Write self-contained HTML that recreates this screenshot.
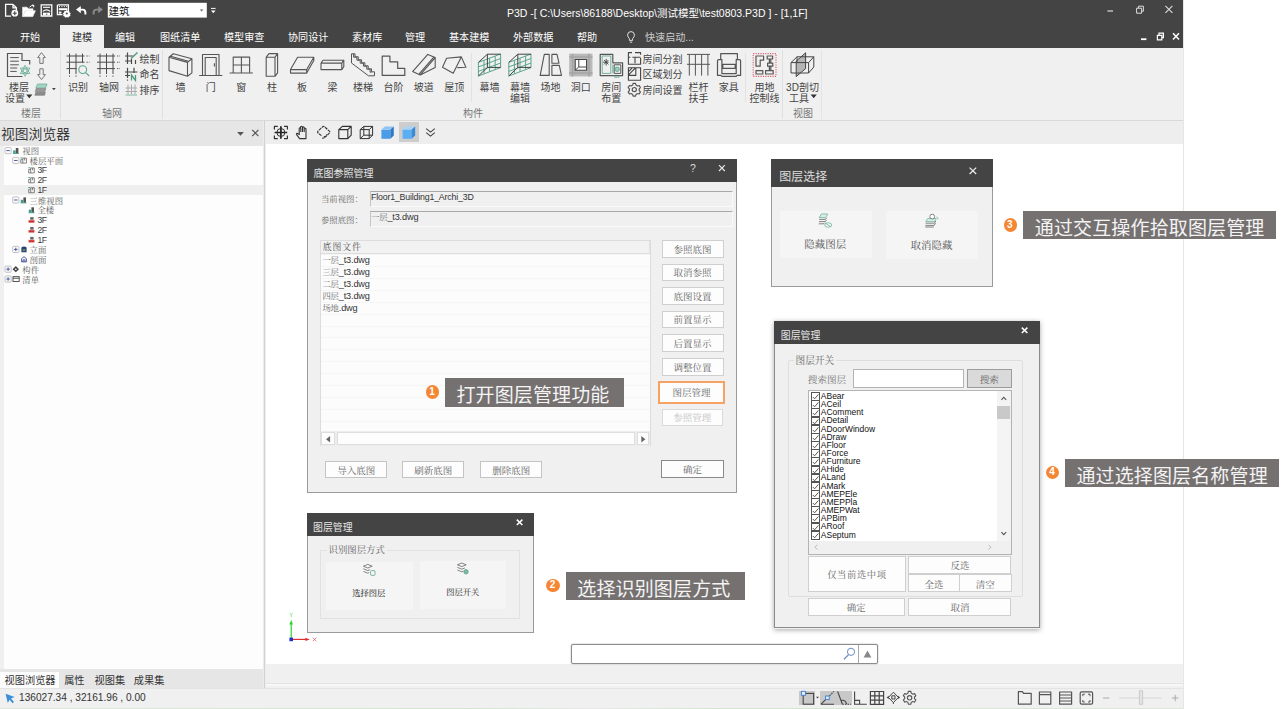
<!DOCTYPE html>
<html lang="zh-CN">
<head>
<meta charset="utf-8">
<title>P3D</title>
<style>
*{box-sizing:border-box;margin:0;padding:0}
html,body{width:1285px;height:709px;overflow:hidden;background:#fff}
body{font-family:"Liberation Sans","Noto Sans CJK SC",sans-serif;font-size:12px;color:#333;position:relative}
.abs,.abs *{position:absolute}
.abs{position:absolute}
.t{position:absolute;white-space:nowrap;line-height:1}
.serif{font-family:"Liberation Serif","Noto Serif CJK SC",serif}
svg{position:absolute;overflow:visible}
#app{position:absolute;left:0;top:0;width:1184px;height:709px;background:#fff;border-right:1px solid #e6e6e6;overflow:hidden}
#titlebar{position:absolute;left:0;top:0;width:1183px;height:48px;background:#444}
#ribbon{position:absolute;left:0;top:48px;width:1183px;height:72px;background:#f0f0f0}
#ribline{position:absolute;left:0;top:120px;width:1183px;height:1px;background:#d9d9d9}
.tab{position:absolute;top:31px;color:#fff;font-size:10.1px;white-space:nowrap;line-height:14px}
.rl{position:absolute;font-size:10px;line-height:11.2px;color:#444;white-space:nowrap;text-align:center}
.gl{position:absolute;top:108px;font-size:10px;line-height:11px;color:#777;white-space:nowrap}
.vsep{position:absolute;width:1px;background:#e0e0e0}

.dlg{position:absolute;background:#f0f0f0;border:1px solid #9a9a9a;border-top:none}
.dtt{position:absolute;background:#444}
.dttx{margin-top:1.1px;position:absolute;white-space:nowrap;color:#e6e6e6;font-size:10px;line-height:12px}
.btn{padding-top:.8px;position:absolute;background:#fdfdfd;border:1px solid #cfcfcf;color:#666;font-family:"Liberation Serif","Noto Serif CJK SC",serif;font-size:9.5px;text-align:center;white-space:nowrap}
.fld{position:absolute;border-top:1px solid #a8a8a8;border-left:1px solid #c4c4c4;border-bottom:1px solid #fafafa;border-right:1px solid #fafafa;background:#f0f0f0}
.sl{margin-top:1.3px;position:absolute;white-space:nowrap;font-family:"Liberation Serif","Noto Serif CJK SC",serif;color:#666}
.nl{position:absolute;white-space:nowrap;color:#333}
</style>
</head>
<body>
<div id="app">
<!-- TITLEBAR -->
<div id="titlebar">
  <svg style="left:0;top:0" width="230" height="24" viewBox="0 0 230 24" fill="none" stroke="#fff" stroke-width="1.3">
    <path d="M13 4.4H5.6V16.2H11 M13 4.4L16.4 7.8V10.5 M13 4.4V7.8H16.4"/>
    <circle cx="14.8" cy="13.2" r="3.4" fill="#fff" stroke="none"/><path d="M14.8 11.2v4M12.8 13.2h4" stroke="#444" stroke-width="1.1"/>
    <path d="M22.6 16.6V7.2H27L28.4 8.8H33V10.4H25.2L22.6 16.6Z M25.6 10.8H35.4L32.8 16.6H22.8Z" fill="#fff" stroke-width=".6"/>
    <path d="M29.5 7.2Q31.5 4.8 34 5.6M34 5.6l-1.6-.9M34 5.6l-.6 1.7" stroke-width="1"/>
    <path d="M41.2 4.9H51.8V16H41.2Z" stroke-width="1.3"/><path d="M43 7.3H50" stroke-width="1.1"/><path d="M42.8 11.4Q46.5 8.2 50.2 11.400000" stroke-width="1.2"/><rect x="43" y="12.7" width="7" height="2.6" fill="#fff" stroke="none"/><path d="M45.8 14.2h1.6" stroke="#444" stroke-width=".9"/>
    <path d="M57.4 4.9H68.4V11 M57.4 4.9V14.6H62.4" stroke-width="1.3"/><path d="M59 6.600000h1M61.4 6.600000h1M63.800000 6.600000h1M66.2 6.600000h1" stroke-width="1"/><rect x="58.8" y="8.2" width="8.6" height="2" fill="#fff" stroke="none"/><rect x="58.8" y="11.6" width="2.6" height="2" fill="#fff" stroke="none"/>
    <path d="M66.8 9.8l.9 1.300000 1.500000-.2.3 1.500000 1.400000.8-.9 1.300000.5 1.500000-1.500000.4-.8 1.400000-1.400000-.7-1.400000.7-.8-1.400000-1.500000-.4.5-1.500000-.9-1.300000 1.400000-.8.3-1.500000 1.500000.2z" fill="#fff" stroke="none"/><circle cx="66.8" cy="13.4" r="1" fill="#444" stroke="none"/>
    <path d="M76 9.6l4.800000-3.600000v7.200000z" fill="#fff" stroke="none"/><path d="M80 9.600000H82.600000Q85.400000 9.600000 85.400000 12.800000V14.600000" stroke-width="1.900000"/>
    <path d="M103 9.6l-4.800000-3.600000v7.200000z" fill="#8a8a8a" stroke="none"/><path d="M99 9.600000H96.400000Q93.600000 9.600000 93.600000 12.800000V14.600000" stroke="#8a8a8a" stroke-width="1.900000"/>
    <rect x="107.8" y="2.8" width="99" height="14.8" fill="#fff" stroke="none"/>
    <path d="M199.8 9.4h3.6l-1.8 2.2z" fill="#666" stroke="none"/>
    <path d="M211 8.4h4.6" stroke-width="1"/><path d="M211 10.6h4.6l-2.3 2.6z" fill="#fff" stroke="none"/>
  </svg>
  <div class="t" style="left:108.5px;top:4.5px;font-size:10.5px;color:#111;line-height:12px">建筑</div>
  <div class="t" style="left:507px;top:6px;font-size:10.5px;color:#fff;line-height:14px" id="ttl">P3D -[ C:\Users\86188\Desktop\测试模型\test0803.P3D ] - [1,1F]</div>
  <svg style="left:1100px;top:0" width="84" height="48" viewBox="1100 0 84 48" fill="none" stroke="#ddd" stroke-width="1">
    <path d="M1107.4 11h5.6" stroke-width="1.2"/>
    <path d="M1136.6 8.2h5v5h-5z M1138.4 8.2V6.2h5v5h-1.8"/>
    <path d="M1165.4 5.8l7 7M1172.4 5.8l-7 7" stroke-width="1.1"/>
    <g stroke="#fff" stroke-width="1.5">
    <path d="M1141 39.2h5.4" stroke-width="1.8"/>
    <path d="M1157.4 35.4h4.4v4.4h-4.4z M1159 35.4V33.2h4.4v4.4h-1.6" stroke-width="1.2"/>
    <path d="M1173 33.2l6 6.2M1179 33.2l-6 6.2"/>
    </g>
  </svg>
  <svg style="left:626px;top:30px" width="12" height="14" viewBox="0 0 12 14" fill="none" stroke="#ddd" stroke-width="1"><path d="M3.4 8.6Q1.6 7 1.6 5A3.4 3.4 0 0 1 8.400000000000001 5Q8.4 7 6.6 8.6V10.4H3.4Z M3.8 12.2H6.2"/></svg>
  <div class="abs" style="left:60px;top:25px;width:44px;height:23px;background:#f0f0f0"></div>
  <div class="tab" style="left:20px">开始</div>
  <div class="tab" style="left:72px;color:#333">建模</div>
  <div class="tab" style="left:115px">编辑</div>
  <div class="tab" style="left:160px">图纸清单</div>
  <div class="tab" style="left:224px">模型审查</div>
  <div class="tab" style="left:288px">协同设计</div>
  <div class="tab" style="left:352px">素材库</div>
  <div class="tab" style="left:405px">管理</div>
  <div class="tab" style="left:449px">基本建模</div>
  <div class="tab" style="left:513px">外部数据</div>
  <div class="tab" style="left:577px">帮助</div>
  <div class="tab" style="left:645px;color:#ccc">快速启动...</div>
</div>
<!-- RIBBON -->
<div id="ribbon"></div>
<div id="ribline"></div>
<!-- group separators -->
<div class="vsep" style="left:60px;top:50px;height:69px"></div>
<div class="vsep" style="left:162px;top:50px;height:69px"></div>
<div class="vsep" style="left:471px;top:53px;height:49px;background:#e2e2e2"></div>
<div class="vsep" style="left:745px;top:53px;height:49px;background:#e2e2e2"></div>
<div class="vsep" style="left:782px;top:50px;height:69px"></div>
<div class="vsep" style="left:821px;top:50px;height:69px;background:#e4e4e4"></div>
<div class="gl" style="left:21px">楼层</div>
<div class="gl" style="left:102px">轴网</div>
<div class="gl" style="left:463px">构件</div>
<div class="gl" style="left:793px">视图</div>
<!-- G1 楼层 -->
<svg style="left:0;top:48px" width="62" height="60" viewBox="0 48 62 60" fill="none" stroke="#555" stroke-width="1.2">
  <path d="M22.5 76.5H7.5V53.5H22V60.5H29.7V64.5"/>
  <path d="M10.2 57.6h8.6M10.2 61.2h8.6M10.2 64.8h8.6M10.2 68h7M10.2 71.4h6.5" stroke-width="1"/>
  <g stroke="#5aa58a" stroke-width="1.1">
    <circle cx="25.1" cy="70.8" r="1.9" stroke-width=".8" fill="#f0f0f0"/>
    <path d="M25.10 65.30L29.86 73.55L20.34 73.55Z M25.10 76.30L20.34 68.05L29.86 68.05Z" stroke-linejoin="round" stroke-width=".75"/>
  </g>
  <path d="M41.5 52.6l3.9 5h-2.2v5.8h-3.4v-5.8h-2.2z" stroke="#777" stroke-width="1"/>
  <path d="M41.5 79.6l3.9-5h-2.2v-5.8h-3.4v5.8h-2.2z" stroke="#777" stroke-width="1"/>
  <path d="M37.5 84h9.6l-1.6 4h-9.6z" fill="#a9d3c2" stroke="#6fb39a" stroke-width=".8"/>
  <path d="M36.2 88.6h9.6l-.9 3h-9.6z" fill="#9a9a9a" stroke="#777" stroke-width=".6"/>
  <path d="M35.8 92.3h9.6l-.9 3h-9.6z" fill="#8a8a8a" stroke="#777" stroke-width=".6"/>
  <path d="M52 88h3.8l-1.9 2.2z" fill="#444" stroke="none"/>
  <path d="M26.2 94.6h6.2l-3.1 3.7z" fill="#333" stroke="none"/>
</svg>
<div class="rl" style="left:9px;top:82px">楼层</div>
<div class="rl" style="left:5px;top:93.2px">设置</div>
<!-- G2 轴网 -->
<svg style="left:62px;top:48px" width="100" height="60" viewBox="62 48 100 60" fill="none" stroke="#4a4a4a" stroke-width="1">
  <path d="M66.5 56h18M66.5 62.2h18M66.5 68.6h10M69.5 53.6V74M76 53.6V74M82.5 53.6V62.5"/>
  <path d="M86.5 56h3M86.5 62.2h3M69.5 75.5v1.5M76 75.5v1.5" stroke-dasharray="1.2 1.2"/>
  <g stroke="#5aa58a" stroke-width="1.1"><circle cx="82.7" cy="69.6" r="3.9"/><path d="M85.6 72.6l3.6 3.4"/></g>
  <path d="M97 56h18M97 62.2h18M97 68.6h18M100 53.6V74M106.5 53.6V74M113 53.6V74"/>
  <path d="M117 56h3M117 62.2h3M117 68.6h3M100 75.5v1.5M106.5 75.5v1.5M113 75.5v1.5" stroke-dasharray="1.2 1.2"/>
  <!-- 绘制 -->
  <path d="M125 56h8M125 61h6M127.5 52.5V64M131.5 59v5M135.5 60v4" stroke-width="1.2"/>
  <path d="M131 58.5l6.5-6" stroke="#4f9a7f" stroke-width="1.4"/>
  <!-- 命名 -->
  <path d="M125 72h12.5M125 75.5h5M127.5 67.8V78M134 67.8V73" stroke-width="1.2"/>
  <path d="M127.5 79.5v1.2" stroke-width="1.2"/>
  <path d="M131.5 80.5v-5.5l4 5.5v-5.5" stroke="#4f9a7f" stroke-width="1.3"/>
  <!-- 排序 -->
  <g stroke="#aaa" stroke-width="1"><path d="M125.5 88h11.5M125.5 91.5h11.5M128 84.5V94M131.5 84.5V94M135 84.5V94"/></g>
  <path d="M125.5 95h11.5" stroke="#7dbaa3" stroke-width="1"/>
</svg>
<div class="rl" style="left:68px;top:82px">识别</div>
<div class="rl" style="left:99px;top:82px">轴网</div>
<div class="rl" style="left:139.5px;top:53.8px">绘制</div>
<div class="rl" style="left:139.5px;top:69.4px">命名</div>
<div class="rl" style="left:139.5px;top:84.8px">排序</div>
<!-- G3 构件 -->
<svg style="left:164px;top:48px" width="660" height="60" viewBox="164 48 660 60" fill="none" stroke="#555" stroke-width="1.1" stroke-linejoin="round">
  <!-- 墙 -->
  <path d="M169 57.2L187.5 62.4V76.2L169 70.6Z M169 57.2L173.3 53.7L191.9 58.8L187.5 62.4 M191.9 58.8V72.9L187.5 76.2 M170.5 56.2L188.6 61.3"/>
  <!-- 门 -->
  <path d="M199.2 75.5H222.3 M202.5 75.5V54.5H219V75.5 M205.2 75.5V57.5H216.2V75.5 M214.4 63.3V66.6"/>
  <!-- 窗 -->
  <path d="M229.6 73H252.9 M233.2 73V57.1H249.6V73 M241.4 57.1V73 M233.2 65H249.6"/>
  <!-- 柱 -->
  <path d="M266.2 57.2H275V76.3H266.2Z M266.2 57.2L269 53.6H277.6L275 57.2 M277.6 53.6V72.8L275 76.3"/>
  <!-- 板 -->
  <path d="M297.6 57.2H313.8L306.7 69.6H290.5Z M290.5 69.6V73.1H306.7V69.6 M306.7 73.1L313.8 60.6V57.2"/>
  <!-- 梁 -->
  <path d="M321 63.1H341.8V69.6H321Z M321 63.1L323 60.3H343.8L341.8 63.1 M343.8 60.3V66.8L341.8 69.6"/>
  <!-- 楼梯 -->
  <path d="M351.5 53.8h3.5v3h3.3v3h3.3v3h3.3v3h3.3v3h3.3v3h3v4h-6L351.5 63Z M353.6 53.8v3.4h3.3v3h3.3v3h3.3v3h3.3v3h3.3v3h1.5" stroke-width="1"/>
  <!-- 台阶 -->
  <path d="M382.2 56.2h7.7v5.6h7.8v6.6h7.1v7H382.2Z" stroke-width="1.2"/>
  <!-- 坡道 -->
  <path d="M412.6 71.6L427.8 54.4L435.2 57.6V67.5L420.2 74.9Z M420.2 74.9L435.2 57.6 M419 74.2L433.8 57.2"/>
  <!-- 屋顶 -->
  <path d="M442.5 67.3L446.6 58.2L461.3 56.9L453.2 73.2Z M461.3 56.9L465.9 67.3L457.3 67.6"/>
  <!-- 幕墙 x2 -->
  <g id="mq">
  <g stroke="#5aa58a" stroke-width="1">
    <path d="M478.4 62.4L500.6 54V67.6L478.4 76Z M478.4 66.9L500.6 58.5 M478.4 71.4L500.6 63 M484 60.3V73.9 M489.6 58.2V71.8 M495.2 56.1V69.7"/>
  </g>
  <path d="M478.4 62.4L487.4 54.2H500.6 M487.4 54.2V67.4H500.6 M487.4 67.4L478.4 76" stroke="#444" stroke-width="1"/>
  </g>
  <use href="#mq" x="30.4"/>
  <!-- 场地 -->
  <path d="M544.3 54.4H549.2V75.4H540.2Z M551.9 54.4H557L559 63.2H551.9Z M551.9 65.4H559.3L561.5 75.4H551.9Z"/>
  <!-- 洞口 -->
  <rect x="569.2" y="53.7" width="23.3" height="22.7" fill="#b9b9b9" stroke="none"/>
  <path d="M572.6 53.7V76.4 M589 53.7V76.4 M569.2 57H592.5 M569.2 73H592.5" stroke="#a4a4a4" stroke-width="1.6"/>
  <rect x="575.2" y="59.5" width="11.4" height="10.8" fill="#fff" stroke="#444" stroke-width="1.1"/>
  <path d="M578.8 60V67H586.4 M578.8 67L575.4 70" stroke="#444" stroke-width="1"/>
  <!-- 房间布置 -->
  <path d="M600.2 54.4H612.8V62.8H622.6V75.6H600.2Z" stroke="#555" stroke-width="1.2"/>
  <path d="M602.2 56H610.8V73.4H602.2Z M612.8 64.5V73.4 M614.5 75.6V77.2H619.2V75.6" stroke="#6fb39a" stroke-width="1"/>
  <rect x="614.2" y="64.8" width="6.6" height="8.6" stroke="#555" stroke-width="1"/>
  <circle cx="617.2" cy="69.3" r="2.2" fill="#9fcdb9" stroke="#5aa58a" stroke-width=".9"/>
  <path d="M603 62.2H608.6 M606.2 58.8V65.6 M604 60L608.4 64.4 M608.4 60L604 64.4" stroke="#444" stroke-width=".9"/>
  <!-- 房间分割 -->
  <path d="M632 52.6H628.4V64.2H640.6V58 M635 52.6H640.6V54.8 M628.4 57.2H630.4 M632.4 57.2H640.6 M635 57.2V63.2" stroke="#444" stroke-width="1.1"/>
  <!-- 区域划分 -->
  <path d="M628.4 67.8H640.6V80.2H628.4Z M628.4 75.4H635.8V67.8 M628.8 74.6L635.2 68.2 M628.8 71.4L632 68.2" stroke="#444" stroke-width="1.1"/>
  <!-- 房间设置 gear -->
  <g stroke="#555" stroke-width="1.2">
  <circle cx="634.3" cy="89.6" r="2.1"/>
  <path d="M633.1 83.4h2.4l.5 1.7 1.5.9 1.7-.5 1.2 2.1-1.2 1.3v1.7l1.2 1.3-1.2 2.1-1.7-.5-1.5.9-.5 1.7h-2.4l-.5-1.7-1.5-.9-1.7.5-1.2-2.1 1.2-1.3v-1.7l-1.2-1.3 1.2-2.1 1.7.5 1.5-.9z"/>
  </g>
  <!-- 栏杆扶手 -->
  <path d="M687 54.4H710 M687 64.3H710 M689.3 54.4V75.6 M695.4 54.4V75.6 M701.6 54.4V75.6 M707.9 54.4V75.6" stroke="#555" stroke-width="1"/>
  <!-- 家具 -->
  <path d="M720.7 59.5V53.7H737.4V59.5 M717.5 60.8Q717.5 59.6 718.7 59.6H721.9V73.6H736.2V59.6H739.4Q740.6 59.6 740.6 60.8V75.4H737L736.2 76.3H721.9L721 75.4H717.5Z M722.8 64.3H735.2V68.3H722.8Z" stroke-width="1.2"/>
  <!-- 用地控制线 -->
  <rect x="753.2" y="53.6" width="22.8" height="22.8" stroke="#e0566a" stroke-width="1.1" stroke-dasharray="1.1 1.3"/>
  <path d="M756 56H763.6V60.2H760.2V66.2H756Z M767.2 56H772.6V59H767.2Z M767.6 63.2H772.8V66.2H767.6Z M769.4 59V63.2 M770.8 59V63.2 M769.4 66.2V70.6 M770.8 66.2V70.6 M756 70.6H762.8V74H756Z M765.6 70.6H773.2V74H765.6Z" stroke="#555" stroke-width="1.2"/>
  <!-- 3D剖切 -->
  <path d="M796.2 61.2L805.6 52.8V68.6L796.2 76.6Z" fill="#b5b5b5" stroke="#444" stroke-width="1"/>
  <path d="M791 62.6H808.6V73H791Z M791 62.6L797 56.8H813.8L808.6 62.6 M813.8 56.8V67L808.6 73 M797 56.8V62" stroke="#444" stroke-width="1"/>
  <path d="M810.6 94.6h6.2l-3.1 3.7z" fill="#333" stroke="none"/>
</svg>
<div class="rl" style="left:180.5px;top:82px;transform:translateX(-50%)">墙</div>
<div class="rl" style="left:210.7px;top:82px;transform:translateX(-50%)">门</div>
<div class="rl" style="left:241.2px;top:82px;transform:translateX(-50%)">窗</div>
<div class="rl" style="left:271.9px;top:82px;transform:translateX(-50%)">柱</div>
<div class="rl" style="left:302px;top:82px;transform:translateX(-50%)">板</div>
<div class="rl" style="left:332.6px;top:82px;transform:translateX(-50%)">梁</div>
<div class="rl" style="left:363px;top:82px;transform:translateX(-50%)">楼梯</div>
<div class="rl" style="left:393.5px;top:82px;transform:translateX(-50%)">台阶</div>
<div class="rl" style="left:423.8px;top:82px;transform:translateX(-50%)">坡道</div>
<div class="rl" style="left:454.2px;top:82px;transform:translateX(-50%)">屋顶</div>
<div class="rl" style="left:489.4px;top:82px;transform:translateX(-50%)">幕墙</div>
<div class="rl" style="left:520px;top:82px;transform:translateX(-50%)">幕墙<br>编辑</div>
<div class="rl" style="left:550.5px;top:82px;transform:translateX(-50%)">场地</div>
<div class="rl" style="left:580.8px;top:82px;transform:translateX(-50%)">洞口</div>
<div class="rl" style="left:611.3px;top:82px;transform:translateX(-50%)">房间<br>布置</div>
<div class="rl" style="left:698.6px;top:82px;transform:translateX(-50%)">栏杆<br>扶手</div>
<div class="rl" style="left:728.8px;top:82px;transform:translateX(-50%)">家具</div>
<div class="rl" style="left:764.5px;top:82px;transform:translateX(-50%)">用地<br>控制线</div>
<div class="rl" style="left:802.5px;top:82px;transform:translateX(-50%)">3D剖切</div>
<div class="rl" style="left:789px;top:93.2px">工具</div>
<div class="rl" style="left:642.5px;top:53.8px">房间分割</div>
<div class="rl" style="left:642.5px;top:69.4px">区域划分</div>
<div class="rl" style="left:642.5px;top:84.8px">房间设置</div>
<!-- LEFT PANEL -->
<div class="abs" style="left:0;top:121px;width:264px;height:24.6px;background:#e6e6e6"></div>
<div class="t" style="left:1px;top:127px;font-size:13.8px;color:#3a3a3a;line-height:15px">视图浏览器</div>
<svg style="left:234px;top:128px" width="28" height="12" viewBox="234 128 28 12" fill="none" stroke="#666" stroke-width="1"><path d="M237.1 131.9h6.8l-3.400000 3.900000z" fill="#555" stroke="none"/><path d="M252.2 129.9l6.200000 6.200000M258.400000 129.9l-6.200000 6.200000" stroke="#555" stroke-width="1.2"/></svg>
<div class="abs" style="left:0;top:146px;width:4px;height:526px;background:#f0f0f0"></div>
<div class="abs" style="left:4px;top:146px;width:259px;height:523px;background:#fdfdfd"></div>
<div class="abs" style="left:4px;top:185.1px;width:259px;height:10px;background:#efefef"></div>
<div class="abs" style="left:263px;top:121px;width:3px;height:567px;background:#ececec"></div>
<div class="abs" style="left:264px;top:121px;width:1.4px;height:567px;background:#d2d2d2"></div>
<svg style="left:0;top:146px" width="263" height="150" viewBox="0 146 263 150">
<rect x="5" y="147.50" width="6.2" height="6.2" rx="1" fill="#fafafa" stroke="#b4b4b4" stroke-width=".8"/><path d="M6.4 150.60h3.4" stroke="#4a5aa8" stroke-width="1"/><path d="M15.799999999999999 153.40v-5.4h2.6v5.4z" fill="#555"/><path d="M13.2 153.40v-3h2.4v3z" fill="#3f9a8c"/><path d="M12.899999999999999 153.50h6" stroke="#3f9a8c" stroke-width=".8"/>
<rect x="12.7" y="157.38" width="6.2" height="6.2" rx="1" fill="#fafafa" stroke="#b4b4b4" stroke-width=".8"/><path d="M14.1 160.48h3.4" stroke="#4a5aa8" stroke-width="1"/><path d="M20.799999999999997 163.08v-3.4h2v-1.6h3.6v5z M22.799999999999997 159.68v3.4 M24.599999999999998 158.08v2.4" fill="none" stroke="#666" stroke-width=".8"/><path d="M20.4 157.88h2" stroke="#3f9a8c" stroke-width=".9"/>
<path d="M28.7 172.96v-3.4h2v-1.6h3.6v5z M30.7 169.56v3.4 M32.5 167.96v2.4" fill="none" stroke="#666" stroke-width=".8"/><path d="M28.3 167.76h2" stroke="#3f9a8c" stroke-width=".9"/>
<path d="M28.7 182.84v-3.4h2v-1.6h3.6v5z M30.7 179.44v3.4 M32.5 177.84v2.4" fill="none" stroke="#666" stroke-width=".8"/><path d="M28.3 177.64h2" stroke="#3f9a8c" stroke-width=".9"/>
<path d="M28.7 192.72v-3.4h2v-1.6h3.6v5z M30.7 189.32v3.4 M32.5 187.72v2.4" fill="none" stroke="#666" stroke-width=".8"/><path d="M28.3 187.52h2" stroke="#3f9a8c" stroke-width=".9"/>
<rect x="12.7" y="196.90" width="6.2" height="6.2" rx="1" fill="#fafafa" stroke="#b4b4b4" stroke-width=".8"/><path d="M14.1 200.00h3.4" stroke="#4a5aa8" stroke-width="1"/><path d="M23.400000000000002 202.80v-5.4h2.6v5.4z" fill="#555"/><path d="M20.8 202.80v-3h2.4v3z" fill="#3f9a8c"/><path d="M20.5 202.90h6" stroke="#3f9a8c" stroke-width=".8"/>
<path d="M31.400000000000002 212.68v-5.4h2.6v5.4z" fill="#555"/><path d="M28.8 212.68v-3h2.4v3z" fill="#3f9a8c"/><path d="M28.5 212.78h6" stroke="#3f9a8c" stroke-width=".8"/>
<path d="M30.200000000000003 220.36v-3.2h3.4v3.2z" fill="#666"/><path d="M28.6 222.66v-2.6h5.8v2.6z" fill="#d03030"/><path d="M29.0 219.96h5" stroke="#fff" stroke-width=".5"/>
<path d="M30.200000000000003 230.24v-3.2h3.4v3.2z" fill="#666"/><path d="M28.6 232.54v-2.6h5.8v2.6z" fill="#d03030"/><path d="M29.0 229.84h5" stroke="#fff" stroke-width=".5"/>
<path d="M30.200000000000003 240.12v-3.2h3.4v3.2z" fill="#666"/><path d="M28.6 242.42v-2.6h5.8v2.6z" fill="#d03030"/><path d="M29.0 239.72h5" stroke="#fff" stroke-width=".5"/>
<rect x="12.7" y="246.30" width="6.2" height="6.2" rx="1" fill="#fafafa" stroke="#b4b4b4" stroke-width=".8"/><path d="M14.1 249.40h3.4" stroke="#4a5aa8" stroke-width="1"/><path d="M15.799999999999999 247.70v3.4" stroke="#4a5aa8" stroke-width="1"/><path d="M21.4 252.30v-4.8q2.6-2 5.2 0v4.8z" fill="#2a3f7a"/><path d="M22.6 249.00h2.8v2.2h-2.8z" fill="#5a8a6a"/>
<path d="M21.6 261.88v-3.2l2.4-2 2.4 2v3.2z M23 261.88v-2h2v2" fill="none" stroke="#3a4a9a" stroke-width=".9"/>
<rect x="5" y="266.06" width="6.2" height="6.2" rx="1" fill="#fafafa" stroke="#b4b4b4" stroke-width=".8"/><path d="M6.4 269.16h3.4" stroke="#4a5aa8" stroke-width="1"/><path d="M8.1 267.46v3.4" stroke="#4a5aa8" stroke-width="1"/><path d="M15.8 265.96l3.2 3.2-3.2 3.2-3.2-3.2z" fill="#444"/><path d="M15.8 268.16l1 1-1 1-1-1z" fill="#fff"/>
<rect x="5" y="275.94" width="6.2" height="6.2" rx="1" fill="#fafafa" stroke="#b4b4b4" stroke-width=".8"/><path d="M6.4 279.04h3.4" stroke="#4a5aa8" stroke-width="1"/><path d="M8.1 277.34v3.4" stroke="#4a5aa8" stroke-width="1"/><rect x="13.0" y="276.64" width="6.2" height="4.8" fill="#fff" stroke="#444" stroke-width=".9"/><path d="M13.0 278.24h6.2" stroke="#444" stroke-width=".9"/>
</svg>
<div class="t serif" style="left:22.3px;top:147.20px;font-size:8.4px;line-height:10px;color:#5c5c5c">视图</div>
<div class="t serif" style="left:29.6px;top:157.08px;font-size:8.4px;line-height:10px;color:#5c5c5c">楼层平面</div>
<div class="t" style="left:37.4px;top:165.46px;font-size:8.6px;line-height:10px;color:#3a3a3a;letter-spacing:-.4px">3F</div>
<div class="t" style="left:37.4px;top:175.34px;font-size:8.6px;line-height:10px;color:#3a3a3a;letter-spacing:-.4px">2F</div>
<div class="t" style="left:37.4px;top:185.22px;font-size:8.6px;line-height:10px;color:#3a3a3a;letter-spacing:-.4px">1F</div>
<div class="t serif" style="left:29.6px;top:196.60px;font-size:8.4px;line-height:10px;color:#5c5c5c">三维视图</div>
<div class="t serif" style="left:37.4px;top:206.48px;font-size:8.4px;line-height:10px;color:#5c5c5c">全楼</div>
<div class="t" style="left:37.4px;top:214.86px;font-size:8.6px;line-height:10px;color:#3a3a3a;letter-spacing:-.4px">3F</div>
<div class="t" style="left:37.4px;top:224.74px;font-size:8.6px;line-height:10px;color:#3a3a3a;letter-spacing:-.4px">2F</div>
<div class="t" style="left:37.4px;top:234.62px;font-size:8.6px;line-height:10px;color:#3a3a3a;letter-spacing:-.4px">1F</div>
<div class="t serif" style="left:29.6px;top:246.00px;font-size:8.4px;line-height:10px;color:#5c5c5c">立面</div>
<div class="t serif" style="left:29.6px;top:255.88px;font-size:8.4px;line-height:10px;color:#5c5c5c">剖面</div>
<div class="t serif" style="left:22.3px;top:265.76px;font-size:8.4px;line-height:10px;color:#5c5c5c">构件</div>
<div class="t serif" style="left:22.3px;top:275.64px;font-size:8.4px;line-height:10px;color:#5c5c5c">清单</div>
<!-- canvas toolbar -->
<div class="abs" style="left:266px;top:121px;width:917px;height:23px;background:#eee"></div>
<div class="abs" style="left:399.3px;top:122.2px;width:19.8px;height:20.2px;background:#cdcdcd"></div>
<svg style="left:268px;top:121px" width="172" height="23" viewBox="268 121 172 23" fill="none" stroke="#333" stroke-width="1.1" stroke-linejoin="round">
  <path d="M274.4 129.6V126.4H277.8 M284 126.4H287.4V129.6 M287.4 135.4V138.6H284 M277.8 138.6H274.4V135.4" stroke-width="1.2"/>
  <path d="M280.9 126.2V138.8 M274.6 132.5H287.2" stroke-width="1.7" stroke="#222"/><circle cx="280.9" cy="132.5" r="4" stroke-width="1"/>
  <path d="M299.6 138.6L296.6 134.6Q296 133.4 297.2 133.2L299.2 134.6V128.2Q299.8 127.2 300.6 128.2V126.8Q301.4 125.8 302.4 126.8V127.4Q303.2 126.4 304.2 127.4V128.6Q305.2 127.8 306 128.8V138.6Z M300.8 128V132 M302.5 127V132 M304.2 127.6V132"/>
  <path d="M321.4 135.6L317.800000 132.8Q317.200000 132 318 131.2L322.600000 126.800000Q323.600000 126 324.600000 126.800000L329.400000 131.2Q330.200000 132 329.600000 132.800000L326.800000 135.6" stroke-dasharray="3 .8"/><path d="M322 138.200000Q324.400000 138.600000 326 136.400000 M326.400000 134.400000L326.200000 136.800000L323.800000 136.400000" stroke-width="1"/>
  <path d="M338.8 129.6H347.8V138.6H338.8Z M338.8 129.6L342.4 126.4H351.2L347.8 129.6 M351.2 126.4V135.2L347.8 138.6"/>
  <path d="M360.2 129.6H369.2V138.6H360.2Z M360.2 129.6L363.8 126.4H372.6L369.2 129.6 M372.6 126.4V135.2L369.2 138.6 M363.8 126.4V135.2H372.6 M363.8 135.2L360.2 138.6" stroke-width="1"/>
  <g stroke="none">
   <path d="M381.4 129.6H390.4V138.8H381.4Z" fill="#4a9be8"/><path d="M381.4 129.6L385 126.4H393.8L390.4 129.6Z" fill="#8cc4f6"/><path d="M393.8 126.4V135.4L390.4 138.8V129.6Z" fill="#2f78c4"/>
   <path d="M402.6 129.6H411.6V138.8H402.6Z" fill="#5aaef4"/><path d="M402.6 129.6L406.2 126.4H415.2L411.6 129.6Z" fill="#a6d4fa"/><path d="M415.2 126.4V135.4L411.6 138.8V129.6Z" fill="#3a8ad6"/>
  </g>
  <path d="M426.2 128.6L430.5 132.2L434.8 128.6 M426.2 132.6L430.5 136.2L434.8 132.6" stroke="#444" stroke-width="1.1"/>
</svg>
<!-- canvas -->
<div class="abs" style="left:266px;top:144px;width:917px;height:520px;background:#fff"></div>
<!-- DIALOG 1 -->
<div class="dtt" style="left:307px;top:159px;width:430px;height:23px"></div>
<div class="dlg" style="left:307px;top:182px;width:430px;height:310.5px"></div>
<div class="dttx" style="left:313.4px;top:167.4px">底图参照管理</div>
<div class="dttx" style="left:690px;top:161.4px;font-size:10.5px;color:#ddd">?</div>
<svg style="left:718px;top:164px" width="8" height="8" viewBox="0 0 8 8" stroke="#eee" stroke-width="1.1" fill="none"><path d="M1 1.2l5.8 5.8M6.800000000000001 1.2L1 7"/></svg>
<div class="sl" style="left:321px;top:193.4px;font-size:8.4px;line-height:10px">当前视图：</div>
<div class="sl" style="left:321px;top:214.4px;font-size:8.4px;line-height:10px">参照底图：</div>
<div class="fld" style="left:370px;top:191px;width:362.5px;height:16px"></div>
<div class="fld" style="left:370px;top:211px;width:362.5px;height:16px"></div>
<div class="nl" style="left:371px;top:191.8px;font-size:8.8px;letter-spacing:-.18px;line-height:11px" id="f1t">Floor1_Building1_Archi_3D</div>
<div class="nl" style="left:371px;top:211.8px;font-size:9.2px;letter-spacing:-.18px;line-height:11px" id="f2t"><span class="serif" style="font-size:8.4px;color:#666">一层</span>_t3.dwg</div>
<!-- list -->
<div class="abs" style="left:320px;top:239.5px;width:330.5px;height:206.5px;background:#fcfcfc;border:1px solid #dcdcdc;background-image:repeating-linear-gradient(to bottom,transparent 0,transparent 10.93px,#f5f5f5 10.93px,#f5f5f5 11.93px);background-position:0 2.04px"></div>
<div class="abs" style="left:321px;top:240.5px;width:328.5px;height:13px;background:#f2f2f2;border-bottom:1px solid #dcdcdc;border-right:1px solid #e2e2e2"></div>
<div class="sl" style="left:322.8px;top:241.2px;font-size:8.9px;line-height:11px;color:#555;letter-spacing:.85px">底图文件</div>
<div class="nl" style="left:322.4px;top:255.4px;font-size:9.2px;letter-spacing:-.18px;line-height:11px"><span class="serif" style="font-size:8.4px;color:#666">一层</span>_t3.dwg</div>
<div class="nl" style="left:322.4px;top:267.3px;font-size:9.2px;letter-spacing:-.18px;line-height:11px"><span class="serif" style="font-size:8.4px;color:#666">三层</span>_t3.dwg</div>
<div class="nl" style="left:322.4px;top:279.2px;font-size:9.2px;letter-spacing:-.18px;line-height:11px"><span class="serif" style="font-size:8.4px;color:#666">二层</span>_t3.dwg</div>
<div class="nl" style="left:322.4px;top:291.1px;font-size:9.2px;letter-spacing:-.18px;line-height:11px"><span class="serif" style="font-size:8.4px;color:#666">四层</span>_t3.dwg</div>
<div class="nl" style="left:322.4px;top:303.0px;font-size:9.2px;letter-spacing:-.18px;line-height:11px"><span class="serif" style="font-size:8.4px;color:#666">场地</span>.dwg</div>
<!-- hscroll -->
<div class="abs" style="left:321px;top:431.4px;width:328.5px;height:14.2px;background:#ececec"></div>
<div class="abs" style="left:321.4px;top:431.8px;width:13.4px;height:13.5px;background:#fdfdfd;border:1px solid #dedede"></div>
<div class="abs" style="left:337px;top:431.8px;width:297.6px;height:13.5px;background:#fdfdfd;border:1px solid #dedede"></div>
<div class="abs" style="left:636.6px;top:431.8px;width:12.9px;height:13.5px;background:#fdfdfd;border:1px solid #dedede"></div>
<svg style="left:321px;top:431.5px" width="330" height="14" viewBox="0 0 330 14"><path d="M9.1 4v6.400000L5 7.200000z M320.300000 4v6.400000L324.400000 7.200000z" fill="#666"/></svg>
<div class="btn" style="left:661.5px;top:240px;width:62px;height:17.5px;line-height:16px">参照底图</div>
<div class="btn" style="left:661.5px;top:263.7px;width:62px;height:17.5px;line-height:16px">取消参照</div>
<div class="btn" style="left:661.5px;top:287.3px;width:62px;height:17.5px;line-height:16px">底图设置</div>
<div class="btn" style="left:661.5px;top:310.6px;width:62px;height:17.5px;line-height:16px">前置显示</div>
<div class="btn" style="left:661.5px;top:334.2px;width:62px;height:17.5px;line-height:16px">后置显示</div>
<div class="btn" style="left:661.5px;top:358px;width:62px;height:17.5px;line-height:16px">调整位置</div>
<div class="btn" style="left:658.1px;top:380.9px;width:66.8px;height:23.6px;line-height:19.6px;border:2.6px solid #f5a262;color:#666">图层管理</div>
<div class="btn" style="left:661.5px;top:409px;width:61.5px;height:17px;line-height:15.5px;color:#bdbdbd;border-color:#dadada">参照管理</div>
<div class="btn" style="left:325.2px;top:460.8px;width:62.3px;height:17.5px;line-height:16px;border-color:#c4c4c4">导入底图</div>
<div class="btn" style="left:402.2px;top:460.8px;width:62.3px;height:17.5px;line-height:16px;border-color:#c4c4c4">刷新底图</div>
<div class="btn" style="left:480.2px;top:460.8px;width:62.3px;height:17.5px;line-height:16px;border-color:#c4c4c4">删除底图</div>
<div class="btn" style="left:661.3px;top:459.8px;width:62.5px;height:18.6px;line-height:17px;border-color:#8a8a8a">确定</div>
<!-- DIALOG 2 -->
<div class="dtt" style="left:307px;top:513px;width:227px;height:22.5px"></div>
<div class="dlg" style="left:307px;top:535.5px;width:227px;height:97.8px"></div>
<div class="dttx" style="left:313px;top:521px;font-size:9.9px">图层管理</div>
<svg style="left:515.6px;top:519px" width="8" height="7" viewBox="0 0 8 7" stroke="#fff" stroke-width="1.5" fill="none"><path d="M.8.6l5.6 5.4M6.4.6L.8 6"/></svg>
<div class="abs" style="left:320.4px;top:549.8px;width:199.4px;height:69.6px;border:1px solid #e2e2e2"></div>
<div class="sl" style="left:326.5px;top:544px;font-size:9.4px;line-height:11px;background:#f0f0f0;padding:0 2px;color:#666">识别图层方式</div>
<div class="abs" style="left:326px;top:561.8px;width:86.5px;height:48px;background:#f5f5f5"></div>
<div class="abs" style="left:419.5px;top:560.7px;width:86.5px;height:48.2px;background:#f5f5f5"></div>
<svg style="left:360px;top:560px" width="112" height="18" viewBox="360 560 112 18" fill="none" stroke="#666" stroke-width=".8">
  <path d="M363.4 566.2l4.4-1.8 4.4 1.8-4.4 1.8z M363.4 568.8l4.4 1.8 2.2-.9 M363.4 571.4l4.4 1.8 1.4-.6"/>
  <rect x="370.6" y="570.6" width="4.4" height="4.8" rx="1" stroke="#5aa58a"/>
  <path d="M457.4 564.8l4.4-1.8 4.4 1.8-4.4 1.8z M457.4 567.4l4.4 1.8 3-1.2 M457.4 570l4.4 1.8 1.6-.7"/>
  <circle cx="466" cy="571.8" r="2.2" fill="#7dbaa3" stroke="#5aa58a"/>
</svg>
<div class="sl" style="left:352.2px;top:588px;font-size:8.3px;line-height:10px;color:#333;font-weight:500">选择图层</div>
<div class="sl" style="left:446.2px;top:586.9px;font-size:8.3px;line-height:10px;color:#444;font-weight:500">图层开关</div>
<!-- DIALOG 3 -->
<div class="dtt" style="left:771px;top:159px;width:221.5px;height:28.3px"></div>
<div class="dlg" style="left:771px;top:187.3px;width:221.5px;height:99.3px"></div>
<div class="dttx" style="left:779.3px;top:169.2px;font-size:12px;line-height:14px;color:#ddd">图层选择</div>
<svg style="left:969.4px;top:167px" width="8" height="8" viewBox="0 0 8 8" stroke="#eee" stroke-width="1.2" fill="none"><path d="M.6.6l6.6 6.4M7.2.6L.6 7"/></svg>
<div class="abs" style="left:780px;top:211px;width:91.5px;height:47px;background:#f5f5f5"></div>
<div class="abs" style="left:886.3px;top:211px;width:91.5px;height:48.4px;background:#f5f5f5"></div>
<svg style="left:815px;top:211px" width="128" height="18" viewBox="815 211 128 18" fill="none" stroke="#666" stroke-width=".8">
  <path d="M821.4 214h6.4l-2.2 3.6h-6.4z" fill="#dcefe6" stroke="#6fb39a"/>
  <path d="M819.2 219.4h6.4l1-1.6 M819 221.6h6.4l1-1.6 M818.8 223.8h5l.6-1"/>
  <ellipse cx="828.2" cy="225" rx="3.6" ry="2.2" stroke="#6fb39a"/><path d="M825.4 223.2l5.6 3.6" stroke="#6fb39a"/>
  <path d="M927.6 218.6h8.8l-1.8 3h-8.8z" fill="#dcefe6" stroke="#6fb39a"/>
  <path d="M925.6 223.2h8.8l1.4-2.2 M925.4 225.4h8.8l1.4-2.2 M925.2 227h8.6"/>
  <circle cx="932.2" cy="216.6" r="2.4" fill="#fff"/>
  <path d="M936.6 216.6q1.6 1 1.4 2.6" stroke="#6fb39a"/>
</svg>
<div class="sl" style="left:804.3px;top:237.4px;font-size:10.5px;line-height:12px;color:#555">隐藏图层</div>
<div class="sl" style="left:910.6px;top:238.4px;font-size:10.5px;line-height:12px;color:#555">取消隐藏</div>
<!-- DIALOG 4 -->
<div class="abs" style="left:774px;top:320.5px;width:265.5px;height:308px;box-shadow:0 1px 5px rgba(0,0,0,.35);background:#f0f0f0"></div>
<div class="dtt" style="left:774px;top:320.5px;width:265.5px;height:23.2px"></div>
<div class="dlg" style="left:774px;top:343.7px;width:265.5px;height:284.8px;border-color:#8a8a8a"></div>
<div class="dttx" style="left:780.8px;top:328.6px;font-size:9.9px">图层管理</div>
<svg style="left:1020.6px;top:326.8px" width="8" height="7" viewBox="0 0 8 7" stroke="#fff" stroke-width="1.5" fill="none"><path d="M.8.6l5.6 5.4M6.4.6L.8 6"/></svg>
<div class="abs" style="left:788.4px;top:359.8px;width:234.2px;height:237px;border:1px solid #dedede;border-radius:2px"></div>
<div class="sl" style="left:793.5px;top:354.2px;font-size:9.7px;line-height:11px;background:#f0f0f0;padding:0 2px;color:#666">图层开关</div>
<div class="sl" style="left:807.8px;top:372.3px;font-size:9.6px;line-height:11px;color:#777">搜索图层</div>
<div class="abs" style="left:853px;top:369.4px;width:110.6px;height:18.4px;background:#fff;border:1px solid #b4b4b4"></div>
<div class="btn" style="left:967px;top:369.4px;width:44.5px;height:18.6px;line-height:17px;background:#dadada;border-color:#9c9c9c;color:#666;font-size:9.6px">搜索</div>
<div class="abs" style="left:808px;top:390.2px;width:203.5px;height:164.4px;background:#f0f0f0;border:1px solid #b4b4b4"></div>
<div class="abs" style="left:809px;top:391.2px;width:188.4px;height:149.6px;background:#fff;overflow:hidden" id="lyr">
<div class="abs" style="left:1.8px;top:1.00px;width:8.8px;height:8.8px;border:1px solid #555;background:#fff"></div><svg style="left:1.8px;top:1.00px" width="9" height="9" viewBox="0 0 9 9" fill="none" stroke="#444" stroke-width=".9"><path d="M1.8 5l1.8 1.8 3.8-4.4"/></svg><div class="t" style="left:11.8px;top:0.80px;font-size:8.5px;line-height:9px;color:#111">ABear</div>
<div class="abs" style="left:1.8px;top:9.15px;width:8.8px;height:8.8px;border:1px solid #555;background:#fff"></div><svg style="left:1.8px;top:9.15px" width="9" height="9" viewBox="0 0 9 9" fill="none" stroke="#444" stroke-width=".9"><path d="M1.8 5l1.8 1.8 3.8-4.4"/></svg><div class="t" style="left:11.8px;top:8.95px;font-size:8.5px;line-height:9px;color:#111">ACeil</div>
<div class="abs" style="left:1.8px;top:17.30px;width:8.8px;height:8.8px;border:1px solid #555;background:#fff"></div><svg style="left:1.8px;top:17.30px" width="9" height="9" viewBox="0 0 9 9" fill="none" stroke="#444" stroke-width=".9"><path d="M1.8 5l1.8 1.8 3.8-4.4"/></svg><div class="t" style="left:11.8px;top:17.10px;font-size:8.5px;line-height:9px;color:#111">AComment</div>
<div class="abs" style="left:1.8px;top:25.45px;width:8.8px;height:8.8px;border:1px solid #555;background:#fff"></div><svg style="left:1.8px;top:25.45px" width="9" height="9" viewBox="0 0 9 9" fill="none" stroke="#444" stroke-width=".9"><path d="M1.8 5l1.8 1.8 3.8-4.4"/></svg><div class="t" style="left:11.8px;top:25.25px;font-size:8.5px;line-height:9px;color:#111">ADetail</div>
<div class="abs" style="left:1.8px;top:33.60px;width:8.8px;height:8.8px;border:1px solid #555;background:#fff"></div><svg style="left:1.8px;top:33.60px" width="9" height="9" viewBox="0 0 9 9" fill="none" stroke="#444" stroke-width=".9"><path d="M1.8 5l1.8 1.8 3.8-4.4"/></svg><div class="t" style="left:11.8px;top:33.40px;font-size:8.5px;line-height:9px;color:#111">ADoorWindow</div>
<div class="abs" style="left:1.8px;top:41.75px;width:8.8px;height:8.8px;border:1px solid #555;background:#fff"></div><svg style="left:1.8px;top:41.75px" width="9" height="9" viewBox="0 0 9 9" fill="none" stroke="#444" stroke-width=".9"><path d="M1.8 5l1.8 1.8 3.8-4.4"/></svg><div class="t" style="left:11.8px;top:41.55px;font-size:8.5px;line-height:9px;color:#111">ADraw</div>
<div class="abs" style="left:1.8px;top:49.90px;width:8.8px;height:8.8px;border:1px solid #555;background:#fff"></div><svg style="left:1.8px;top:49.90px" width="9" height="9" viewBox="0 0 9 9" fill="none" stroke="#444" stroke-width=".9"><path d="M1.8 5l1.8 1.8 3.8-4.4"/></svg><div class="t" style="left:11.8px;top:49.70px;font-size:8.5px;line-height:9px;color:#111">AFloor</div>
<div class="abs" style="left:1.8px;top:58.05px;width:8.8px;height:8.8px;border:1px solid #555;background:#fff"></div><svg style="left:1.8px;top:58.05px" width="9" height="9" viewBox="0 0 9 9" fill="none" stroke="#444" stroke-width=".9"><path d="M1.8 5l1.8 1.8 3.8-4.4"/></svg><div class="t" style="left:11.8px;top:57.85px;font-size:8.5px;line-height:9px;color:#111">AForce</div>
<div class="abs" style="left:1.8px;top:66.20px;width:8.8px;height:8.8px;border:1px solid #555;background:#fff"></div><svg style="left:1.8px;top:66.20px" width="9" height="9" viewBox="0 0 9 9" fill="none" stroke="#444" stroke-width=".9"><path d="M1.8 5l1.8 1.8 3.8-4.4"/></svg><div class="t" style="left:11.8px;top:66.00px;font-size:8.5px;line-height:9px;color:#111">AFurniture</div>
<div class="abs" style="left:1.8px;top:74.35px;width:8.8px;height:8.8px;border:1px solid #555;background:#fff"></div><svg style="left:1.8px;top:74.35px" width="9" height="9" viewBox="0 0 9 9" fill="none" stroke="#444" stroke-width=".9"><path d="M1.8 5l1.8 1.8 3.8-4.4"/></svg><div class="t" style="left:11.8px;top:74.15px;font-size:8.5px;line-height:9px;color:#111">AHide</div>
<div class="abs" style="left:1.8px;top:82.50px;width:8.8px;height:8.8px;border:1px solid #555;background:#fff"></div><svg style="left:1.8px;top:82.50px" width="9" height="9" viewBox="0 0 9 9" fill="none" stroke="#444" stroke-width=".9"><path d="M1.8 5l1.8 1.8 3.8-4.4"/></svg><div class="t" style="left:11.8px;top:82.30px;font-size:8.5px;line-height:9px;color:#111">ALand</div>
<div class="abs" style="left:1.8px;top:90.65px;width:8.8px;height:8.8px;border:1px solid #555;background:#fff"></div><svg style="left:1.8px;top:90.65px" width="9" height="9" viewBox="0 0 9 9" fill="none" stroke="#444" stroke-width=".9"><path d="M1.8 5l1.8 1.8 3.8-4.4"/></svg><div class="t" style="left:11.8px;top:90.45px;font-size:8.5px;line-height:9px;color:#111">AMark</div>
<div class="abs" style="left:1.8px;top:98.80px;width:8.8px;height:8.8px;border:1px solid #555;background:#fff"></div><svg style="left:1.8px;top:98.80px" width="9" height="9" viewBox="0 0 9 9" fill="none" stroke="#444" stroke-width=".9"><path d="M1.8 5l1.8 1.8 3.8-4.4"/></svg><div class="t" style="left:11.8px;top:98.60px;font-size:8.5px;line-height:9px;color:#111">AMEPEle</div>
<div class="abs" style="left:1.8px;top:106.95px;width:8.8px;height:8.8px;border:1px solid #555;background:#fff"></div><svg style="left:1.8px;top:106.95px" width="9" height="9" viewBox="0 0 9 9" fill="none" stroke="#444" stroke-width=".9"><path d="M1.8 5l1.8 1.8 3.8-4.4"/></svg><div class="t" style="left:11.8px;top:106.75px;font-size:8.5px;line-height:9px;color:#111">AMEPPla</div>
<div class="abs" style="left:1.8px;top:115.10px;width:8.8px;height:8.8px;border:1px solid #555;background:#fff"></div><svg style="left:1.8px;top:115.10px" width="9" height="9" viewBox="0 0 9 9" fill="none" stroke="#444" stroke-width=".9"><path d="M1.8 5l1.8 1.8 3.8-4.4"/></svg><div class="t" style="left:11.8px;top:114.90px;font-size:8.5px;line-height:9px;color:#111">AMEPWat</div>
<div class="abs" style="left:1.8px;top:123.25px;width:8.8px;height:8.8px;border:1px solid #555;background:#fff"></div><svg style="left:1.8px;top:123.25px" width="9" height="9" viewBox="0 0 9 9" fill="none" stroke="#444" stroke-width=".9"><path d="M1.8 5l1.8 1.8 3.8-4.4"/></svg><div class="t" style="left:11.8px;top:123.05px;font-size:8.5px;line-height:9px;color:#111">APBim</div>
<div class="abs" style="left:1.8px;top:131.40px;width:8.8px;height:8.8px;border:1px solid #555;background:#fff"></div><svg style="left:1.8px;top:131.40px" width="9" height="9" viewBox="0 0 9 9" fill="none" stroke="#444" stroke-width=".9"><path d="M1.8 5l1.8 1.8 3.8-4.4"/></svg><div class="t" style="left:11.8px;top:131.20px;font-size:8.5px;line-height:9px;color:#111">ARoof</div>
<div class="abs" style="left:1.8px;top:139.55px;width:8.8px;height:8.8px;border:1px solid #555;background:#fff"></div><svg style="left:1.8px;top:139.55px" width="9" height="9" viewBox="0 0 9 9" fill="none" stroke="#444" stroke-width=".9"><path d="M1.8 5l1.8 1.8 3.8-4.4"/></svg><div class="t" style="left:11.8px;top:139.35px;font-size:8.5px;line-height:9px;color:#111">ASeptum</div>
</div>
<div class="abs" style="left:997.4px;top:391.2px;width:13.1px;height:149.6px;background:#f4f4f4"></div>
<div class="abs" style="left:997.4px;top:405.6px;width:13.1px;height:13px;background:#c9c9c9"></div>
<svg style="left:997px;top:391px" width="14" height="164" viewBox="997 391 14 164" fill="none" stroke="#555" stroke-width="1.1"><path d="M1001.4 399.8l2.4-2.4 2.4 2.4 M1001.4 532.2l2.4 2.4 2.4-2.4"/></svg>
<svg style="left:809px;top:541px" width="201" height="13" viewBox="809 541 201 13" fill="none" stroke="#bbb" stroke-width="1"><path d="M817.2 544.8l-2.2 2.4 2.2 2.4 M988.6 544.8l2.2 2.4-2.2 2.4"/></svg>
<div class="btn" style="left:808px;top:556.3px;width:97.8px;height:36px;line-height:35px;letter-spacing:.6px;font-size:9.3px">仅当前选中项</div>
<div class="btn" style="left:908.3px;top:556.3px;width:103.2px;height:18px;line-height:16.5px">反选</div>
<div class="btn" style="left:908.3px;top:573.6px;width:51.4px;height:18.6px;line-height:20.5px">全选</div>
<div class="btn" style="left:959px;top:573.6px;width:52.5px;height:18.6px;line-height:20.5px">清空</div>
<div class="btn" style="left:808px;top:598.2px;width:96.6px;height:18px;line-height:16.5px">确定</div>
<div class="btn" style="left:908.3px;top:598.2px;width:103.2px;height:18px;line-height:16.5px">取消</div>
<!-- axis -->
<svg style="left:284px;top:608px" width="40" height="40" viewBox="284 608 40 40" fill="none">
  <path d="M291.2 638.6V622" stroke="#2bd42b" stroke-width="1.2"/><path d="M291.2 620l-1.8 4.4h3.600000000000023z" fill="#2bd42b"/>
  <path d="M291.4 639.4H307" stroke="#e03030" stroke-width="1.2"/><path d="M309.8 639.4l-4.4-1.7v3.400000000000091z" fill="#e03030"/>
  <rect x="289.4" y="637.6" width="3.6" height="3.6" fill="#2030d0"/>
  <path d="M289.6 612.8l1.6 2 1.6-2M291.2 614.8v2.4" stroke="#7be07b" stroke-width=".8"/>
  <path d="M312.8 637.6l3.6 3.6M316.4 637.6l-3.6 3.6" stroke="#e86060" stroke-width=".8"/>
</svg>
<!-- bottom -->
<div class="abs" style="left:266px;top:664px;width:917px;height:25px;background:#f0f0f0"></div>
<div class="abs" style="left:266px;top:683.4px;width:917px;height:1px;background:#e4e4e4"></div><div class="abs" style="left:266px;top:684.4px;width:917px;height:1.2px;background:#f7f7f7"></div>
<div class="abs" style="left:0;top:669px;width:263px;height:19px;background:#e6e6e6"></div>
<div class="abs" style="left:0;top:672px;width:59px;height:16px;background:#fdfdfd"></div>
<div class="t" style="left:4.6px;top:675.2px;font-size:10.2px;line-height:12px;color:#333">视图浏览器</div>
<div class="t" style="left:64.2px;top:675.2px;font-size:10.2px;line-height:12px;color:#333">属性</div>
<div class="t" style="left:94.6px;top:675.2px;font-size:10.2px;line-height:12px;color:#333">视图集</div>
<div class="t" style="left:133.8px;top:675.2px;font-size:10.2px;line-height:12px;color:#333">成果集</div>
<div class="abs" style="left:0;top:688px;width:1183px;height:21px;background:#f0f0f0"></div>
<svg style="left:4px;top:692px" width="14" height="14" viewBox="4 692 14 14"><path d="M5.6 693.8l9 3.2-3.6 1.6 3 3.4-1.4 1.2-3-3.4-1.8 3.2z" fill="#3b8ed8"/></svg>
<div class="t" style="left:19px;top:691.6px;font-size:10.15px;line-height:12px;color:#333" id="coord">136027.34 , 32161.96 , 0.00</div>
<div class="abs" style="left:0;top:688px;width:1183px;height:1px;background:#e4e4e4"></div>
<div class="abs" style="left:0;top:707.5px;width:1183px;height:1.5px;background:linear-gradient(90deg,#dfe6dc,#d2e6cf 40%,#e8e8e8 50%,#d2e6cf 60%,#dfe6dc)"></div>
<div class="abs" style="left:799.3px;top:690.5px;width:15.5px;height:14.4px;background:#c8c8c8"></div>
<div class="abs" style="left:819.6px;top:690.5px;width:32.3px;height:14.4px;background:#c8c8c8"></div>
<svg style="left:795px;top:689px" width="390" height="18" viewBox="795 689 390 18" fill="none" stroke="#444" stroke-width="1.1">
  <rect x="803.2" y="693.4" width="10.4" height="10.8"/><rect x="801.4" y="691.3" width="4" height="4" fill="#e8f0fb" stroke="#3a7bd0" stroke-width=".9"/>
  <path d="M816 696.8h3l-1.500000 1.8z" fill="#444" stroke="none"/>
  <path d="M821 704.2H834 M821 704.2L827.6 697.6"/><path d="M827.6 697.6L834 691.4" stroke-dasharray="1.6 1"/><rect x="825.6" y="696" width="3.6" height="3.6" fill="#dfeafa" stroke="#3a7bd0" stroke-width=".9"/>
  <path d="M837.6 691.4L842.4 704.2 M841 700.4Q845.6 699.6 846.6 704.2"/><path d="M842.4 704.2H851" stroke-dasharray="1.4 1.2"/>
  <path d="M854.6 691.6V704.2H866.8 M854.6 700.4H859.6V704.2"/>
  <path d="M870.4 691.5H883.6V704.4H870.4Z M874.8 691.5V704.4 M879.2 691.5V704.4 M870.4 695.8H883.6 M870.4 700.1H883.6" stroke-width="1.2"/>
  <path d="M888.4 697.4L893.4 692.2L898.4 697.4L893.4 702.6Z M891.8 695.8h3.2v3.2h-3.2z M893.4 702.6v1.4" stroke-width="1"/><path d="M886.6 697.4l2.200000-1.6v3.2z M900.2 697.4l-2.2-1.6v3.2z" fill="#444" stroke="none"/>
  <g stroke="#555" stroke-width="1.1"><circle cx="909.6" cy="697.8" r="2.2"/><path d="M908.4 691.4h2.4l.5 1.8 1.500000.9 1.800000-.5 1.200000 2.100000-1.300000 1.300000v1.600000l1.300000 1.300000-1.200000 2.100000-1.800000-.5-1.500000.9-.5 1.800000h-2.4l-.5-1.800000-1.500000-.9-1.800000.5-1.200000-2.100000 1.300000-1.300000v-1.600000l-1.300000-1.300000 1.200000-2.100000 1.800000.5 1.500000-.9z"/></g>
  <g stroke="#555" stroke-width="1.2" stroke-linejoin="round">
  <path d="M1018.4 704.2V691.6H1022.4L1023.6 693.4H1031.2V704.2Z"/>
  <path d="M1039.4 692H1050.8V704.2H1039.4Z M1039.4 694.6H1050.8"/>
  <path d="M1059.6 692H1071.6V704.2H1059.600000Z M1059.6 695H1071.6 M1059.6 698H1071.6 M1059.6 701H1071.6"/>
  <rect x="1080.2" y="691.8" width="12.4" height="12.4" rx="1.4"/>
  <path d="M1082.800000 696.200000v-2h2 M1088 694.2h2v2 M1090 700v2h-2 M1084.800000 702h-2v-2" stroke-width="1"/>
  </g>
  <path d="M1103 698h6.4" stroke="#aaa" stroke-width="1"/>
  <path d="M1119.2 698h42.6" stroke="#d6d6d6" stroke-width="1"/>
  <rect x="1139.3" y="690.8" width="3.4" height="13.4" fill="#e4e4e4" stroke="#c2c2c2" stroke-width=".8"/>
  <path d="M1172 698h6.4M1175.2 694.8v6.4" stroke="#aaa" stroke-width="1"/>
</svg>
<!-- search bar -->
<div class="abs" style="left:570.5px;top:643.6px;width:307px;height:20.4px;background:#fff;border:1px solid #8c8c8c;border-radius:2px;box-shadow:0 0 1.5px #999"></div>
<div class="abs" style="left:857.5px;top:644.5px;width:1px;height:18.3px;background:#aaa"></div>
<svg style="left:840px;top:645px" width="36" height="18" viewBox="840 645 36 18" fill="none" stroke="#6a8cc0" stroke-width="1"><circle cx="851" cy="651.8" r="3.6"/><path d="M848.6 654.6l-4.600000 4.6" stroke-width="1.3"/><path d="M863.6 657.4h7.8l-3.900000-7z" fill="#888" stroke="none"/></svg>
</div>
<!-- annotation labels -->
<div id="labels">
<div class="abs" style="left:445.2px;top:378px;width:178.5px;height:28.8px;background:#767171"></div><div class="t" style="left:456.4px;top:383.8px;font-size:19px;letter-spacing:.14px;line-height:23px;color:#f4f4f4">打开图层管理功能</div><div class="abs" style="left:425.8px;top:385.2px;width:13.4px;height:13.4px;border-radius:50%;background:#f58634"></div><div class="t" style="left:425.3px;top:387.5px;width:13.4px;text-align:center;font-size:10px;line-height:10px;margin-top:-.9px;font-weight:bold;color:#fff">1</div>
<div class="abs" style="left:566px;top:572.2px;width:178.9px;height:27.6px;background:#767171"></div><div class="t" style="left:577.3px;top:578.2px;font-size:19px;letter-spacing:.14px;line-height:23px;color:#f4f4f4">选择识别图层方式</div><div class="abs" style="left:546.4px;top:578.8px;width:13.4px;height:13.4px;border-radius:50%;background:#f58634"></div><div class="t" style="left:545.9px;top:581.1px;width:13.4px;text-align:center;font-size:10px;line-height:10px;margin-top:-.9px;font-weight:bold;color:#fff">2</div>
<div class="abs" style="left:1023.2px;top:211.3px;width:252.8px;height:28.2px;background:#767171"></div><div class="t" style="left:1034.8px;top:216.9px;font-size:19px;letter-spacing:.14px;line-height:23px;color:#f4f4f4">通过交互操作拾取图层管理</div><div class="abs" style="left:1003.7px;top:218.2px;width:13.4px;height:13.4px;border-radius:50%;background:#f58634"></div><div class="t" style="left:1003.2px;top:220.5px;width:13.4px;text-align:center;font-size:10px;line-height:10px;margin-top:-.9px;font-weight:bold;color:#fff">3</div>
<div class="abs" style="left:1065.2px;top:459.3px;width:214.0px;height:28.2px;background:#767171"></div><div class="t" style="left:1076.4px;top:465.3px;font-size:19px;letter-spacing:.14px;line-height:23px;color:#f4f4f4">通过选择图层名称管理</div><div class="abs" style="left:1045.9px;top:465.8px;width:13.4px;height:13.4px;border-radius:50%;background:#f58634"></div><div class="t" style="left:1045.4px;top:468.1px;width:13.4px;text-align:center;font-size:10px;line-height:10px;margin-top:-.9px;font-weight:bold;color:#fff">4</div>
</div>
</body>
</html>
